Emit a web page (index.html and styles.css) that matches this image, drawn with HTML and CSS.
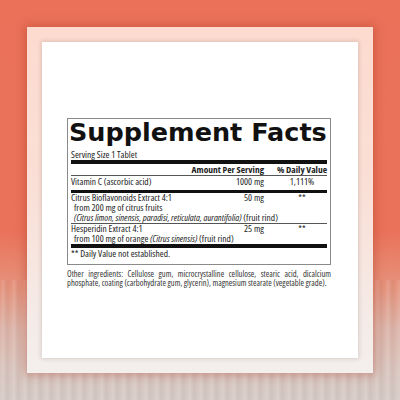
FILE: index.html
```html
<!DOCTYPE html>
<html>
<head>
<meta charset="utf-8">
<link rel="stylesheet" href="styles.css">
</head>
<body>
<div class="scene">
  <div class="frame">
    <div class="panel">
      <div class="label">
        <div class="title">Supplement Facts</div>
        <div class="serving">Serving Size 1 Tablet</div>
        <div class="bar thick4"></div>
        <div class="grid head">
          <span></span><span class="amt">Amount Per Serving</span><span class="dv">% Daily Value</span>
        </div>
        <div class="grid row first">
          <span>Vitamin C (ascorbic acid)</span><span class="amt">1000 mg</span><span class="dv">1,111%</span>
        </div>
        <div class="bar thick3"></div>
        <div class="group thin">
          <div class="grid row">
            <span>Citrus Bioflavonoids Extract 4:1</span><span class="amt">50 mg</span><span class="dv">**</span>
          </div>
          <div class="sub">from 200 mg of citrus fruits</div>
          <div class="sub"><i>(Citrus limon, sinensis, paradisi, reticulata, aurantifolia)</i> (fruit rind)</div>
        </div>
        <div class="group">
          <div class="grid row">
            <span>Hesperidin Extract 4:1</span><span class="amt">25 mg</span><span class="dv">**</span>
          </div>
          <div class="sub">from 100 mg of orange <i>(Citrus sinensis)</i> (fruit rind)</div>
        </div>
        <div class="bar thick4"></div>
        <div class="foot">** Daily Value not established.</div>
      </div>
      <p class="other">Other ingredients: Cellulose gum, microcrystalline cellulose, stearic acid, dicalcium phosphate, coating (carbohydrate gum, glycerin), magnesium stearate (vegetable grade).</p>
    </div>
  </div>
</div>
</body>
</html>
```
FILE: styles.css
```css
html, body {
  margin: 0;
  padding: 0;
}
body {
  width: 400px;
  height: 400px;
  overflow: hidden;
  font-family: "Open Sans", "Liberation Sans", sans-serif;
  font-stretch: 87.5%;
}
.scene {
  width: 400px;
  height: 400px;
  padding: 27px;
  box-sizing: border-box;
  background-color: #eb7159;
  background-image:
    repeating-linear-gradient(90deg, rgba(255,255,255,0) 0px, rgba(255,255,255,0.12) 3px, rgba(120,90,80,0.07) 7px, rgba(255,255,255,0) 11px),
    linear-gradient(to bottom, #eb7159 0%, #ea725a 58%, #e5937d 72%, #dcb3a7 82%, #d9c4bd 92%, #d5cbc7 100%);
  background-size: 100% 120px, 100% 100%;
  background-position: left bottom, left top;
  background-repeat: no-repeat, no-repeat;
}
.frame {
  width: 346px;
  height: 346px;
  padding: 15px;
  box-sizing: border-box;
  background: linear-gradient(to bottom, #fddbcf 0%, #fadfd6 45%, #f6e8e3 75%, #f3efed 100%);
  box-shadow: 0 0 9px 2px rgba(160, 50, 30, 0.35);
}
.panel {
  width: 316px;
  height: 316px;
  box-sizing: border-box;
  background: #fff;
  box-shadow: 0 0 4px 1px rgba(90, 60, 50, 0.18);
  padding: 76px 27px 0 25px;
  color: #222;
}
.label {
  border: 1px solid #8a8a8a;
  padding: 1px 3px 0 3px;
  font-size: 9.5px;
  line-height: 10px;
}
.title {
  font-family: "DejaVu Sans", sans-serif;
  font-stretch: normal;
  font-weight: bold;
  font-size: 25.5px;
  line-height: 24px;
  color: #111;
  margin-left: -2px;
  white-space: nowrap;
}
.serving {
  padding-top: 6px;
}
.bar {
  background: #111;
}
.thick4 { height: 4px; }
.thick3 { height: 3px; margin-top: 3px; }
.grid {
  display: grid;
  grid-template-columns: 1fr auto 50px;
  column-gap: 13px;
  white-space: nowrap;
}
.head {
  font-weight: bold;
  margin-top: 1px;
  border-bottom: 1px solid #555;
}
.first {
  padding-top: 1px;
}
.amt { text-align: right; }
.dv { text-align: center; }
.thin {
  border-bottom: 1px solid #555;
}
.sub {
  padding-left: 3px;
  white-space: nowrap;
}
.foot {
  padding: 1px 0 5px 0;
}
.other {
  margin: 4px 0 0 0;
  font-size: 8.5px;
  font-stretch: 80%;
  line-height: 9px;
  text-align: justify;
  color: #333;
}
```
